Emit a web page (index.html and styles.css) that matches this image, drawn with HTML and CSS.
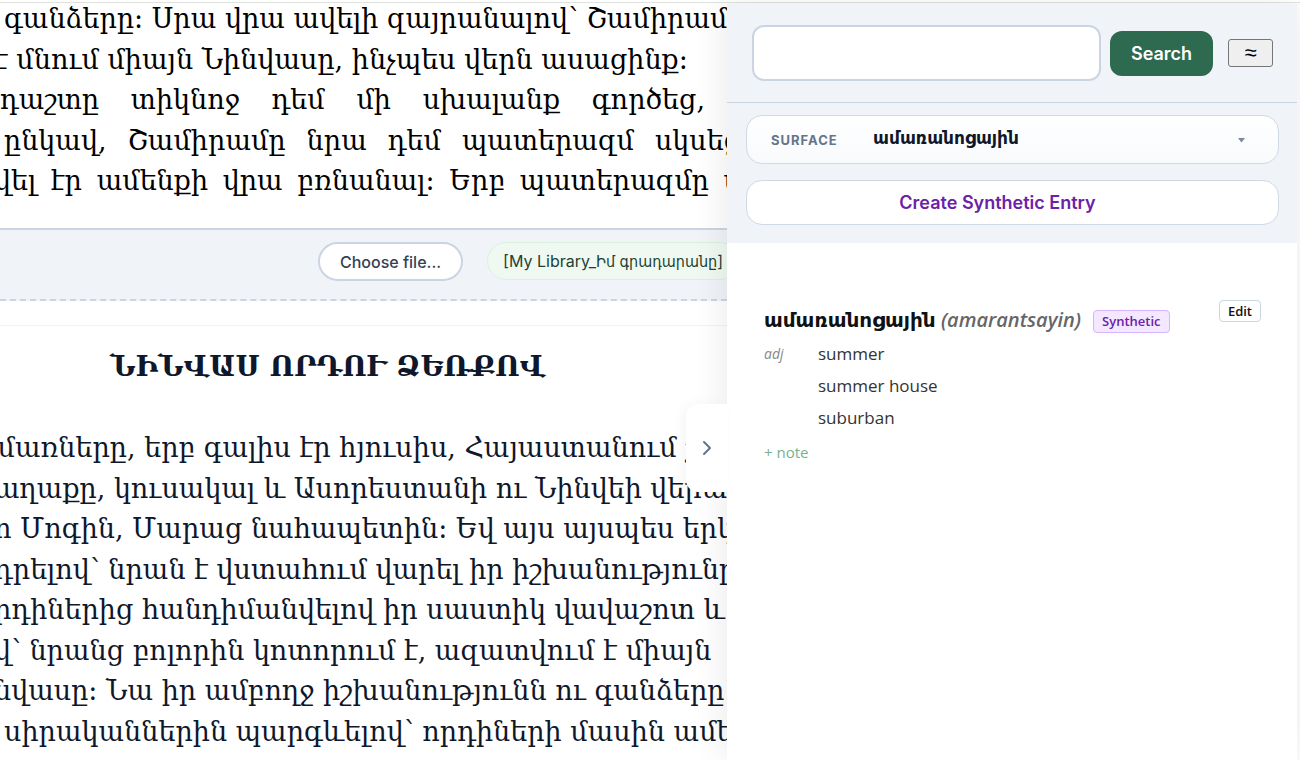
FILE: index.html
```html
<!DOCTYPE html>
<html lang="hy">
<head>
    <meta charset="UTF-8">
    <meta name="viewport" content="width=device-width, initial-scale=1.0">
    <title>Reader</title>
    <link rel="stylesheet" href="styles.css">
</head>
<body>
    <div class="topline"></div>
    <div class="layout">
        <main class="reader">
            <div class="text preview">
                <span class="line indent">գանձերը: Սրա վրա ավելի զայրանալով՝ Շամիրամը</span>
                <span class="line cut">է մնում միայն Նինվասը, ինչպես վերն ասացինք:</span>
                <span class="line full short">դաշտը տիկնոջ դեմ մի սխալանք գործեց,</span>
                <span class="line full long indent">ընկավ, Շամիրամը նրա դեմ պատերազմ սկսեց</span>
                <span class="line full long cut">վել էր ամենքի վրա բռնանալ: Երբ պատերազմը ս</span>
            </div>

            <div class="toolbar">
                <button class="choose" type="button">Choose file...</button>
                <span class="file-name">[My Library_Իմ գրադարանը]</span>
            </div>

            <article class="text book">
                <h1>ՆԻՆՎԱՍ ՈՐԴՈՒ ՁԵՌՔՈՎ</h1>
                <span class="line cut-more">ամառները, երբ գալիս էր հյուսիս, Հայաստանում շ</span>
                <span class="line cut">աղաքը, կուսակալ և Ասորեստանի ու Նինվեի վերա</span>
                <span class="line cut">ո Մոգին, Մարաց նահապետին: Եվ այս այսպես երկ</span>
                <span class="line cut">դրելով՝ նրան է վստահում վարել իր իշխանությունը</span>
                <span class="line cut">րդիներից հանդիմանվելով իր սաստիկ վավաշոտ և վ</span>
                <span class="line cut">վ՝ նրանց բոլորին կոտորում է, ազատվում է միայն</span>
                <span class="line cut">նվասը: Նա իր ամբողջ իշխանությունն ու գանձերը</span>
                <span class="line indent">սիրականներին պարգևելով՝ որդիների մասին ամե</span>
                <span class="line cut">հոգ չի տանում: Սրա վրա նեղանալով նրանք են</span>
            </article>
        </main>

        <aside class="panel">
            <button class="toggle" type="button" aria-label="Hide panel">
                <svg width="18" height="18" viewBox="0 0 18 18" fill="none" stroke="#64748b" stroke-width="2" stroke-linecap="round" stroke-linejoin="round"><path d="M6 3l6 6-6 6"/></svg>
            </button>

            <form class="search">
                <input type="text" aria-label="Search">
                <button class="go" type="button">Search</button>
                <button class="fuzzy" type="button">≈</button>
            </form>

            <div class="lookup">
                <div class="surface">
                    <label for="surface">Surface</label>
                    <select id="surface">
                        <option>ամառանոցային</option>
                    </select>
                    <svg width="8" height="6" viewBox="0 0 8 6"><path d="M1 1h7L4.500 5.500z" fill="#7c8aa0"/></svg>
                </div>
                <button class="create" type="button">Create Synthetic Entry</button>
            </div>

            <section class="entry">
                <div class="head">
                    <h2>ամառանոցային <em>(amarantsayin)</em></h2>
                    <span class="tag">Synthetic</span>
                    <button class="edit" type="button">Edit</button>
                </div>
                <div class="senses">
                    <i>adj</i>
                    <ul>
                        <li>summer</li>
                        <li>summer house</li>
                        <li>suburban</li>
                    </ul>
                </div>
                <a class="note" href="#">+ note</a>
            </section>
        </aside>
    </div>
</body>
</html>
```

FILE: styles.css
```css
* {
    box-sizing: border-box;
}
body {
    margin: 0;
    height: 100vh;
    overflow: hidden;
    display: flex;
    flex-direction: column;
    background: #fff;
    font-family: Inter, "DejaVu Sans", sans-serif;
}
button, input, select {
    font-family: inherit;
    margin: 0;
}
.topline {
    height: 3px;
    flex: none;
    border-bottom: 1px solid #e0e2dd;
}
.layout {
    flex: 1;
    min-height: 0;
    display: flex;
    padding-right: 3px;
    background: #fcfcfc;
}

/* reader */
.reader {
    flex: 1;
    min-width: 0;
    overflow: hidden;
    background: #fff;
}
.text {
    font-family: "DejaVu Serif", serif;
    font-size: 27px;
    line-height: 1.5;
    color: #000;
}
.line {
    display: block;
    white-space: nowrap;
}
.full {
    text-align: justify;
    text-align-last: justify;
}
.indent {
    padding-left: 4px;
}
.cut {
    margin-left: -6px;
}
.cut-more {
    margin-left: -28px;
}
.short {
    padding-right: 22px;
}
.long {
    margin-right: -14px;
}
.preview {
    height: 229px;
    margin-top: -4px;
}
.toolbar {
    height: 73px;
    display: flex;
    align-items: flex-start;
    gap: 24px;
    padding: 12px 0 0 318px;
    background: #f0f4f9;
    border-top: 2px solid #cbd5e1;
    border-bottom: 2px dashed #cbd5e1;
    white-space: nowrap;
}
.choose {
    height: 39px;
    padding: 0 20px;
    border: 2px solid #cbd5e1;
    border-radius: 20px;
    background: #fff;
    color: #334155;
    font-size: 16px;
    font-weight: 500;
}
.file-name {
    height: 38px;
    line-height: 36px;
    padding: 0 15px;
    border: 1px solid #d8f3dc;
    border-radius: 19px;
    background: #f0f9f1;
    color: #1b4332;
    font-family: Inter, "DejaVu Sans Condensed", sans-serif;
    font-size: 16px;
}
.book {
    margin-top: 24px;
    border-top: 1px solid #f1f3f5;
    color: #0f172a;
}
.book h1 {
    margin: 20px 0 40px;
    padding-left: 110px;
    font-size: 28px;
    line-height: 42px;
    white-space: nowrap;
}

/* side panel */
.panel {
    position: relative;
    flex: 0 0 44%;
    max-width: 570px;
    margin-top: 1px;
    background: #fff;
    box-shadow: -4px 0 32px rgba(0, 0, 0, 0.08);
}
.toggle {
    position: absolute;
    top: 400px;
    left: -41px;
    width: 42px;
    height: 88px;
    display: grid;
    place-items: center;
    padding: 0;
    border: 0;
    border-radius: 12px 0 0 12px;
    background: #fff;
    box-shadow: -4px 0 12px rgba(0, 0, 0, 0.04);
}
.search {
    height: 99px;
    display: flex;
    align-items: center;
    padding: 0 24px 0 25px;
    background: #f0f4f9;
    border-bottom: 1px solid #cbd5e1;
}
.search input {
    flex: 1;
    min-width: 0;
    height: 56px;
    padding: 0 16px;
    border: 2px solid #cbd5e1;
    border-radius: 12px;
    background: #fff;
    font-size: 18px;
}
.go {
    width: 103px;
    height: 45px;
    margin: 0 15px 0 9px;
    border: 0;
    border-radius: 12px;
    background: #2d6a4f;
    color: #fff;
    font-size: 18px;
    font-weight: 600;
}
.fuzzy {
    width: 45px;
    height: 28px;
    padding: 0;
    border: 1px solid #767676;
    border-radius: 3px;
    background: #efefef;
    color: #000;
    font-family: "Liberation Sans", sans-serif;
    font-size: 22px;
    line-height: 26px;
}
.lookup {
    padding: 12px 18px 18px 19px;
    background: #f0f4f9;
}
.surface {
    display: flex;
    align-items: center;
    height: 49px;
    padding: 0 33px 0 24px;
    border: 1px solid #d0d9e6;
    border-radius: 16px;
    background: linear-gradient(#fff, #f8fafc);
}
.surface label {
    width: 102px;
    color: #64748b;
    font-size: 13px;
    font-weight: 700;
    letter-spacing: 1px;
    text-transform: uppercase;
}
.surface select {
    flex: 1;
    appearance: none;
    padding: 0 0 4px;
    border: 0;
    background: none;
    color: #0f172a;
    font-size: 17px;
    font-weight: 600;
}
.create {
    width: 100%;
    height: 45px;
    margin-top: 16px;
    padding: 0 30px 0 0;
    border: 1px solid #d0d9e6;
    border-radius: 16px;
    background: #fff;
    color: #6b21a8;
    font-size: 18px;
    font-weight: 600;
}

/* entry */
.entry {
    padding: 57px 36px 0 37px;
    font-family: "Open Sans", "DejaVu Sans", sans-serif;
    color: #333;
}
.head {
    display: flex;
    align-items: flex-start;
}
.entry h2 {
    margin: 4px 12px 0 0;
    color: #111;
    font-size: 20px;
    line-height: 32px;
    font-weight: 600;
}
.entry em {
    color: #666;
}
.tag {
    margin-top: 10px;
    padding: 0 8px;
    border: 1px solid #d8b4fe;
    border-radius: 4px;
    background: #f3e8ff;
    color: #6b21a8;
    font-size: 13px;
    line-height: 21px;
    font-weight: 600;
}
.edit {
    height: 22px;
    margin-left: auto;
    padding: 0 8px;
    border: 1px solid #cbd5e1;
    border-radius: 4px;
    background: #fff;
    color: #111;
    font-size: 13px;
    font-weight: 600;
}
.senses {
    display: flex;
    margin-top: 2px;
    font-size: 17px;
    line-height: 32px;
}
.senses i {
    width: 54px;
    color: #888;
    font-size: 14px;
}
.senses ul {
    margin: 0;
    padding: 0;
    list-style: none;
}
.note {
    display: block;
    margin-top: 6px;
    color: #74b391;
    font-size: 15px;
    line-height: 24px;
    text-decoration: none;
}
```
